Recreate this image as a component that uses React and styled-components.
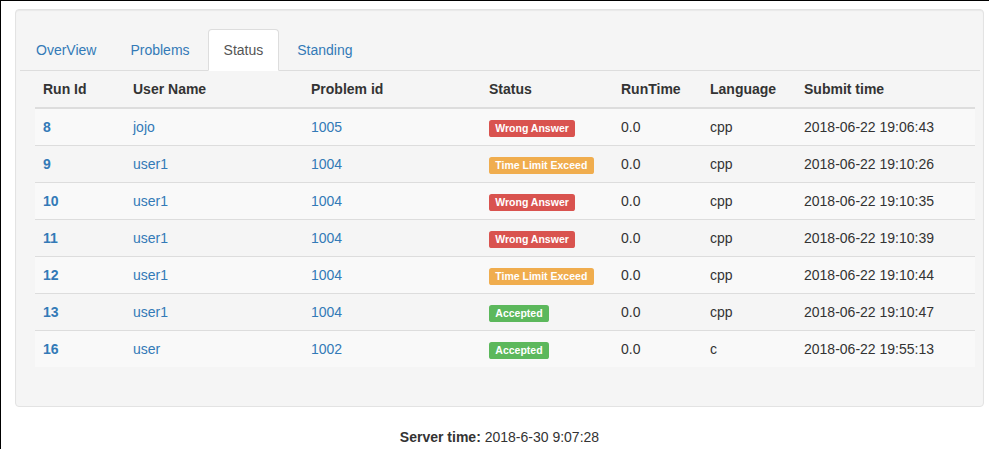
import React from "react";
import styled, { createGlobalStyle } from "styled-components";

const Global = createGlobalStyle`
  html, body { margin: 0; padding: 0; background: #fff; }
  body {
    font-family: "Liberation Sans", Arial, Helvetica, sans-serif;
    font-size: 14px;
    line-height: 20px;
    color: #333;
  }
  * { box-sizing: border-box; }
`;

const Page = styled.div`
  border-top: 1px solid #000;
  border-left: 1px solid #000;
  min-height: 449px;
  padding: 8px 5px 0 14px;
`;

const Well = styled.div`
  width: 969px;
  background: #f5f5f5;
  border: 1px solid #e3e3e3;
  border-radius: 4px;
  box-shadow: inset 0 1px 1px rgba(0, 0, 0, 0.05);
  padding: 19px 3px 19px 4px;
`;

const Tabs = styled.ul`
  display: flex;
  list-style: none;
  margin: 0;
  padding: 0;
  border-bottom: 1px solid #ddd;
`;

const Tab = styled.li`
  margin-right: 2px;
  margin-bottom: -1px;
  a {
    display: block;
    padding: 10px 15px;
    line-height: 20px;
    text-decoration: none;
    border: 1px solid ${(p) => (p.$active ? "#ddd" : "transparent")};
    border-bottom-color: transparent;
    border-radius: 4px 4px 0 0;
    background: ${(p) => (p.$active ? "#fff" : "transparent")};
    color: ${(p) => (p.$active ? "#555" : "#337ab7")};
  }
`;

const TableWrap = styled.div`
  padding: 0 5px 20px 15px;
`;

const Table = styled.table`
  width: 940px;
  border-collapse: collapse;
  border-spacing: 0;
  table-layout: fixed;
`;

const Th = styled.th`
  text-align: left;
  font-weight: bold;
  padding: 8px;
  line-height: 20px;
  border-bottom: 2px solid #ddd;
  width: ${(p) => p.$w}px;
`;

const Tr = styled.tr`
  background: ${(p) => (p.$odd ? "#f9f9f9" : "transparent")};
`;

const Td = styled.td`
  padding: 8px;
  line-height: 20px;
  border-top: 1px solid #ddd;
  vertical-align: top;
  white-space: nowrap;
`;

const Link = styled.a`
  color: #337ab7;
  text-decoration: none;
  font-weight: ${(p) => (p.$bold ? "bold" : "normal")};
`;

const Label = styled.span`
  display: inline;
  padding: 0.2em 0.6em 0.3em;
  font-size: 75%;
  font-weight: bold;
  line-height: 1;
  color: #fff;
  text-align: center;
  white-space: nowrap;
  vertical-align: baseline;
  border-radius: 0.25em;
  background: ${(p) => p.$bg};
`;

const Footer = styled.div`
  width: 969px;
  text-align: center;
  margin-top: 20px;
  line-height: 20px;
  b { font-weight: bold; }
`;

const statusColor = {
  "Wrong Answer": "#d9534f",
  "Time Limit Exceed": "#f0ad4e",
  Accepted: "#5cb85c",
};

const rows = [
  ["8", "jojo", "1005", "Wrong Answer", "cpp", "2018-06-22 19:06:43"],
  ["9", "user1", "1004", "Time Limit Exceed", "cpp", "2018-06-22 19:10:26"],
  ["10", "user1", "1004", "Wrong Answer", "cpp", "2018-06-22 19:10:35"],
  ["11", "user1", "1004", "Wrong Answer", "cpp", "2018-06-22 19:10:39"],
  ["12", "user1", "1004", "Time Limit Exceed", "cpp", "2018-06-22 19:10:44"],
  ["13", "user1", "1004", "Accepted", "cpp", "2018-06-22 19:10:47"],
  ["16", "user", "1002", "Accepted", "c", "2018-06-22 19:55:13"],
];

const cols = [
  ["Run Id", 90],
  ["User Name", 178],
  ["Problem id", 178],
  ["Status", 132],
  ["RunTime", 89],
  ["Language", 94],
  ["Submit time", 179],
];

export default function App() {
  return (
    <>
      <Global />
      <Page>
        <Well>
          <Tabs>
            {["OverView", "Problems", "Status", "Standing"].map((t) => (
              <Tab key={t} $active={t === "Status"}>
                <a href="#">{t}</a>
              </Tab>
            ))}
          </Tabs>
          <TableWrap>
            <Table>
              <thead>
                <tr>
                  {cols.map(([c, w]) => (
                    <Th key={c} $w={w}>
                      {c}
                    </Th>
                  ))}
                </tr>
              </thead>
              <tbody>
                {rows.map((r, i) => (
                  <Tr key={r[0]} $odd={i % 2 === 0}>
                    <Td>
                      <Link href="#" $bold>
                        {r[0]}
                      </Link>
                    </Td>
                    <Td>
                      <Link href="#">{r[1]}</Link>
                    </Td>
                    <Td>
                      <Link href="#">{r[2]}</Link>
                    </Td>
                    <Td>
                      <Label $bg={statusColor[r[3]]}>{r[3]}</Label>
                    </Td>
                    <Td>0.0</Td>
                    <Td>{r[4]}</Td>
                    <Td>{r[5]}</Td>
                  </Tr>
                ))}
              </tbody>
            </Table>
          </TableWrap>
        </Well>
        <Footer>
          <b>Server time:</b> 2018-6-30 9:07:28
        </Footer>
      </Page>
    </>
  );
}
